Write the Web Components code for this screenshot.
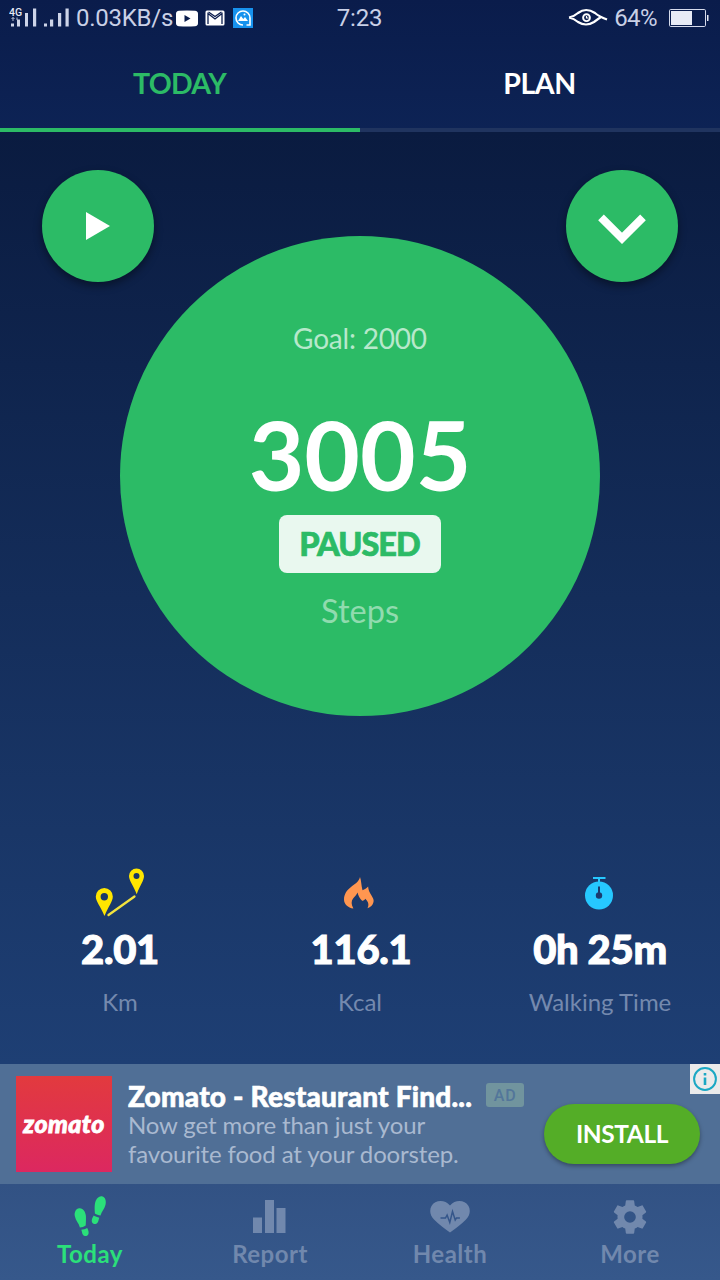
<!DOCTYPE html>
<html lang="en">
<head>
<meta charset="utf-8">
<title>Step counter</title>
<style>
    body{
        margin: 0;
        background: #0a1c40;
        font-family: Lato, "Open Sans", sans-serif;
        color: white;
    }
</style>
</head>
<body>
<step-app></step-app>

<script>
const icons = {
    signal4g: `<svg width="28" height="22" viewBox="0 0 28 22"><g fill="#cdd4e8"><rect x="2" y="16.500" width="3" height="3"/><rect x="8" y="12.500" width="3" height="7"/><rect x="16" y="6" width="3" height="13.500"/><rect x="24" y="1.500" width="3.200" height="18"/></g><path d="M4 10.500v3.500M2.500 12L4 10.500 5.500 12M8 10.500v2.500" stroke="#cdd4e8" fill="none" stroke-width=".9"/><text x="0" y="9" font-family="Roboto" font-weight="500" font-size="10.500" fill="#e6eaf5">4G</text></svg>`,
    signal: `<svg width="27" height="22" viewBox="0 0 27 22"><g fill="#cdd4e8"><rect x="1" y="16.500" width="3" height="3"/><rect x="7" y="12.500" width="3.200" height="7"/><rect x="15" y="6" width="3.200" height="13.500"/><rect x="22.500" y="1.500" width="3.200" height="18"/></g></svg>`,
    video: `<svg width="22" height="17" viewBox="0 0 22 17"><path d="M3 .8Q11 0 19 .8q3 .3 3 3v9.400q0 2.700-3 3Q11 17 3 16.200q-3-.3-3-3V3.800Q0 1.100 3 .8z" fill="#fff"/><path d="M8.500 5l6 3.500-6 3.500z" fill="#0a1c4d"/></svg>`,
    mail: `<svg width="20" height="16" viewBox="0 0 20 16"><rect x=".5" y=".5" width="19" height="15" rx="1.500" fill="#fff"/><path d="M3 14V3.500L10 9l7-5.500V14M3.500 2L10 6.500 16.500 2" fill="none" stroke="#0a1c4d" stroke-width="1.300"/></svg>`,
    gallery: `<svg width="20" height="20" viewBox="0 0 20 20"><path fill="#1792ee" d="M0 0h20v20H0z"/><path d="M10 17a7 7 0 1 1 7-7v7h-3.500" fill="none" stroke="#fff" stroke-width="1.600"/><path d="M5 13l3-5 2.300 3 1.700-2 3 4z" fill="#fff"/><circle cx="11.500" cy="6.500" r="1" fill="#fff"/></svg>`,
    eye: `<svg width="40" height="20" viewBox="0 0 40 20"><g fill="none" stroke="#fff"><path d="M1 9.500Q6 8.500 10 5q8-6 17 0 4 3.500 12 6.500M1 9.500Q6 10.500 10 14q8 5 16 0 4-3 7-5" stroke-width="2.200"/><circle cx="18.500" cy="9.700" r="3.400" stroke-width="1.900"/><path d="M18.500 8v2h2" stroke-width="1.200"/></g></svg>`,
    battery: `<svg width="40" height="18" viewBox="0 0 40 18"><rect x=".5" y=".5" width="36" height="17" rx="1.200" fill="none" stroke="#d6dbec"/><path fill="#e8ebf5" d="M2 2h21v14H2zM38 6h1.500v6H38z"/></svg>`,
    play: `<svg width="24" height="28" viewBox="0 0 24 28"><path d="M0 0l24 14L0 28z" fill="#fff"/></svg>`,
    chevron: `<svg width="48" height="30" viewBox="0 0 48 30"><path d="M3 3.300l21 21 21-21" fill="none" stroke="#fff" stroke-width="8"/></svg>`,
    route: `<svg width="50" height="50" viewBox="0 0 50 50"><g fill="#ffe600"><path fill-rule="evenodd" d="M9.300 20a8.500 8.500 0 0 1 8.500 8.600c0 5-4.300 9.800-8.300 19.400C5.500 38.400.8 33.600.8 28.600A8.500 8.500 0 0 1 9.300 20zm0 5a3.700 3.700 0 1 0 0 7.400 3.700 3.700 0 0 0 0-7.400z"/><path fill-rule="evenodd" d="M41.500.5a7.500 7.500 0 0 1 7.500 7.600c0 4.600-4 9.400-7.300 18.200C38.400 17.500 34 12.700 34 8.100A7.500 7.500 0 0 1 41.500.5zm0 4.500a3 3 0 1 0 0 6 3 3 0 0 0 0-6z"/></g><path d="M13.500 47L39.500 28.500" stroke="#f3e33d" stroke-width="2.300" stroke-linecap="round"/></svg>`,
    flame: `<svg width="30" height="32" viewBox="0 0 30 32"><path d="M16 0c1.300 3.500 1.200 8 2.500 13.300 2.200-.8 4-2 5.600-3.800.3 3.500 1.400 6 3.400 9 1.700 2.800 2.500 4.500 2 6.500-.7 3.200-3 5.200-6 6.300 1.600-3.300 1.200-6.300-2.200-9.600-.9 1.400-2 2-3.200 2-2.200-2-4-5-4.500-8.200-1.300 2.700-2.800 4-4.500 6-2 2.600-2 6 .3 10C4 31 0 27 0 22.500 0 17 3 13 7 10c3-2.500 8-5 9-10z" fill="#ff9650"/></svg>`,
    watch: `<svg width="28" height="33" viewBox="0 0 28 33"><path fill="#26c8ff" d="M8 0h12.500v2H15v3h-2V2H8z"/><circle cx="14" cy="18.500" r="14" fill="#26c8ff"/><circle cx="14" cy="18.500" r="3.200" fill="#1b3b6e"/><path d="M14 9.500v8" stroke="#1b3b6e" stroke-width="2"/></svg>`,
    steps: `<svg width="32" height="41" viewBox="0 0 32 41"><path d="M5.200 12.200c4-.4 6.300 3.500 6.700 7.800.2 3 0 5.500-.2 9.500-1.700 1.300-3.700 1.900-5.800 1.900C5 27.500 1.600 24.500.8 20c-.7-4 1.200-7.500 4.400-7.800zM7.300 33.700c2-.1 4-.8 5.900-1.800 1.200 2 2.100 4.800.9 6.900-1.300 2-4.200 1.600-5.300-.4-.8-1.300-.8-3.200-1.500-4.700z"/><path d="M28 .2c3.300.6 4.400 4.400 3.500 8.500-1 4.500-4 6.500-5 10.800-2-.2-4-.9-5.600-2-.2-3.500-.5-6 0-9.500C21.600 3.500 24.300-.4 28 .2zM19.700 19.600c1.800 1.100 3.500 1.700 5.600 2.100-.7 1.800-.8 3.600-1.800 5.100-1.200 1.700-4 1.700-5.200 0-1.400-2.200.2-5.200 1.400-7.200z"/></svg>`,
    chart: `<svg width="33" height="34" viewBox="0 0 33 34"><path d="M0 17.500h9V33H0zM12 0h9v33h-9zM23.500 8h9v25h-9z"/></svg>`,
    heart: `<svg width="40" height="32" viewBox="0 0 40 32"><path d="M20 31.500Q10 24.500 4 18.500C0 14.500-.8 9 1.500 5 5-1 14.500-2 20 4.500 25.500-2 35-1 38.500 5c2.300 4 1.500 9.500-2.500 13.500Q30 24.500 20 31.500z"/><path d="M10.500 17h5l1.600-3 2.700 7.500 2.700-11 2.700 8.500 1.200-2h3.500" fill="none" stroke="#35568a" stroke-width="1.500"/></svg>`,
    gear: `<svg width="40" height="40" viewBox="0 0 24 24"><path d="M19.430 12.980c.04-.32.070-.64.070-.98s-.03-.66-.07-.98l2.110-1.650c.19-.15.240-.42.120-.64l-2-3.460c-.12-.22-.39-.3-.61-.22l-2.490 1c-.52-.4-1.080-.73-1.690-.98l-.38-2.650C14.460 2.180 14.250 2 14 2h-4c-.25 0-.46.180-.49.420l-.38 2.650c-.61.250-1.170.590-1.690.98l-2.490-1c-.23-.09-.49 0-.61.220l-2 3.460c-.13.220-.07.490.12.640l2.110 1.650c-.04.320-.07.650-.07.980s.03.660.07.980l-2.110 1.650c-.19.150-.24.420-.12.640l2 3.460c.12.220.39.300.61.220l2.490-1c.52.400 1.080.730 1.690.98l.38 2.650c.03.240.24.420.49.420h4c.25 0 .46-.18.490-.42l.38-2.650c.61-.25 1.170-.59 1.690-.98l2.490 1c.23.090.49 0 .61-.22l2-3.460c.12-.22.070-.49-.12-.64zM12 15.500A3.500 3.500 0 1 1 12 8.500a3.500 3.500 0 0 1 0 7z"/></svg>`,
    info: `<svg width="24" height="24" viewBox="0 0 24 24"><circle cx="12" cy="12" r="10.900" fill="none" stroke="#1ba8c4" stroke-width="2"/><path d="M10.700 6h2.600v2.400h-2.600zM10.700 10.500h2.600V18h-2.600z" fill="#1ba8c4"/></svg>`
};

class StepIcon extends HTMLElement{
    connectedCallback(){
        if(!this.shadowRoot) this.attachShadow({mode: 'open'});
        this.shadowRoot.innerHTML = `
            <style>
                :host{ display: block; flex: none; }
                svg{ display: block; fill: currentColor; }
            </style>
            ${icons[this.getAttribute('name')] ?? ''}`;
    }
}
customElements.define('step-icon', StepIcon);

// Base for the elements that only clone a fixed piece of markup
class StepElement extends HTMLElement{
    static markup = '';
    constructor(){
        super();
        this.attachShadow({mode: 'open'});
    }
    connectedCallback(){
        const template = document.createElement('template');
        template.innerHTML = this.constructor.markup;
        this.shadowRoot.replaceChildren(template.content.cloneNode(true));
    }
}

customElements.define('step-status-bar', class extends StepElement{
    static markup = `
        <style>
            :host{
                display: grid;
                grid-template-columns: 1fr auto 1fr;
                align-items: center;
                height: 36px;
                padding: 0 11px 0 9px;
                font: 24px/36px Roboto, sans-serif;
                color: #c9d0e6;
            }
            div{ display: flex; align-items: center; }
            .right{ justify-content: flex-end; }
            .speed{ margin: 0 3px 0 6px; letter-spacing: -.25px; }
            .time{ padding-left: 1px; letter-spacing: -.2px; }
            .percent{ margin: 0 12px 0 6px; letter-spacing: -.6px; }
        </style>
        <div>
            <step-icon name="signal4g"></step-icon>
            <step-icon name="signal" style="margin-left: 6px"></step-icon>
            <span class="speed">0.03KB/s</span>
            <step-icon name="video"></step-icon>
            <step-icon name="mail" style="margin-left: 7px"></step-icon>
            <step-icon name="gallery" style="margin-left: 8px"></step-icon>
        </div>
        <span class="time">7:23</span>
        <div class="right">
            <step-icon name="eye"></step-icon>
            <span class="percent">64%</span>
            <step-icon name="battery"></step-icon>
        </div>
    `;
});

customElements.define('step-tab', class extends StepElement{
    static markup = `
        <style>
            :host{
                display: block;
                flex: 1;
                box-sizing: border-box;
                height: 96px;
                border-bottom: 4px solid #20345f;
                font-size: 28.500px;
                font-weight: 700;
                line-height: 94px;
                letter-spacing: -.4px;
                text-align: center;
                text-indent: -1px;
            }
            :host([active]){
                color: #2cbb66;
                border-color: #2cbb66;
                letter-spacing: -.7px;
            }
        </style>
        <slot></slot>
    `;
});

customElements.define('step-round-button', class extends StepElement{
    static markup = `
        <style>
            :host{
                display: flex;
                align-items: center;
                justify-content: center;
                width: 112px;
                height: 112px;
                border-radius: 50%;
                background: #2cbb66;
                box-shadow: 0 4px 8px rgba(0,0,0,.4);
            }
        </style>
        <slot></slot>
    `;
});

customElements.define('step-dial', class extends StepElement{
    static markup = `
        <style>
            :host{
                display: flex;
                flex-direction: column;
                align-items: center;
                box-sizing: border-box;
                width: 480px;
                height: 480px;
                padding-top: 82px;
                border-radius: 50%;
                background: #2cbb66;
            }
            .goal{ font-size: 28px; line-height: 40px; letter-spacing: -.2px; color: #b7e8cb; }
            .count{ margin-top: 46px; font-size: 96px; line-height: 100px; font-weight: 700; }
            .state{
                margin-top: 11px;
                width: 162px;
                height: 58px;
                border-radius: 8px;
                background: #e9f8ef;
                color: #2cbb66;
                font-size: 32.500px;
                font-weight: 900;
                line-height: 58px;
                letter-spacing: -1px;
                text-align: center;
                text-indent: -1px;
                -webkit-text-stroke: .7px;
            }
            .unit{ margin-top: 18px; font-size: 32.500px; line-height: 40px; color: #91dbaf; }
        </style>
        <div class="goal"><slot name="goal"></slot></div>
        <div class="count"><slot name="count"></slot></div>
        <div class="state"><slot name="state"></slot></div>
        <div class="unit"><slot name="unit"></slot></div>
    `;
});

customElements.define('step-stat', class extends StepElement{
    static markup = `
        <style>
            :host{
                display: flex;
                flex-direction: column;
                align-items: center;
                flex: 1;
            }
            .icon{ display: flex; align-items: center; height: 50px; }
            .value{
                margin-top: 6px;
                font-size: 40px;
                line-height: 50px;
                font-weight: 900;
                letter-spacing: -.3px;
                -webkit-text-stroke: 1px;
            }
            .label{ margin-top: 13px; font-size: 24px; line-height: 30px; color: #7489ae; }
        </style>
        <div class="icon"><slot name="icon"></slot></div>
        <div class="value"><slot name="value"></slot></div>
        <div class="label"><slot></slot></div>
    `;
});

customElements.define('step-ad', class extends StepElement{
    static markup = `
        <style>
            :host{
                display: flex;
                position: relative;
                box-sizing: border-box;
                height: 120px;
                padding: 12px 20px 0 16px;
                background: #506f96;
            }
            .logo{
                width: 96px;
                height: 96px;
                background: linear-gradient(#e23a3e, #dc2860);
                font-size: 25px;
                font-style: italic;
                font-weight: 900;
                line-height: 94px;
                letter-spacing: .4px;
                text-align: center;
                -webkit-text-stroke: .8px;
            }
            .copy{ margin: 6px 0 0 16px; width: 416px; }
            .title{
                display: flex;
                font-size: 28px;
                line-height: 28px;
                font-weight: 900;
                letter-spacing: .2px;
                white-space: nowrap;
                -webkit-text-stroke: .6px;
            }
            .tag{
                margin: 1px 0 0 14px;
                width: 38px;
                height: 24px;
                border-radius: 3px;
                background: #71949e;
                color: #53769a;
                font: 500 16px/25px Roboto, sans-serif;
                letter-spacing: .8px;
                text-align: center;
                -webkit-text-stroke: 0;
            }
            .text{ font-size: 24px; line-height: 29px; letter-spacing: -.14px; color: #a9b9d0; white-space: nowrap; }
            .install{
                margin-top: 28px;
                width: 156px;
                height: 60px;
                border-radius: 30px;
                background: #54ad27;
                box-shadow: 0 2px 4px rgba(0,0,0,.35);
                font-size: 24.500px;
                font-weight: 700;
                line-height: 59px;
                letter-spacing: -.4px;
                text-align: center;
            }
            .info{
                position: absolute;
                top: 0;
                right: 0;
                width: 27px;
                height: 27px;
                padding: 3px 0 0 3px;
                background: #ebebeb;
            }
        </style>
        <div class="logo">zomato</div>
        <div class="copy">
            <div class="title"><span>Zomato - Restaurant Find...</span><span class="tag">AD</span></div>
            <div class="text">Now get more than just your<br>favourite food at your doorstep.</div>
        </div>
        <div class="install">INSTALL</div>
        <div class="info"><step-icon name="info"></step-icon></div>
    `;
});

customElements.define('step-nav-item', class extends StepElement{
    static markup = `
        <style>
            :host{
                display: flex;
                flex-direction: column;
                align-items: center;
                flex: 1;
                color: #7188ad;
                font-size: 24px;
                font-weight: 700;
                line-height: 30px;
                letter-spacing: .5px;
            }
            :host([active]){ color: #2be07a; }
            .icon{ display: flex; align-items: center; height: 41px; margin: 12px 0 2px; }
        </style>
        <div class="icon"><slot name="icon"></slot></div>
        <slot></slot>
    `;
});

customElements.define('step-app', class extends StepElement{
    static markup = `
        <style>
            :host{
                display: flex;
                flex-direction: column;
                width: 720px;
                height: 1280px;
                overflow: hidden;
            }
            header{ background: linear-gradient(#0a1c4b, #0d2355); }
            .tabs{ display: flex; }
            main{
                display: flex;
                flex-direction: column;
                height: 932px;
                background: linear-gradient(#0a1b40, #1e3f74);
            }
            .buttons{
                display: flex;
                justify-content: space-between;
                padding: 38px 42px 0;
            }
            step-dial{ margin: -46px auto 0; }
            .stats{ display: flex; margin-top: 152px; }
            nav{
                display: flex;
                height: 96px;
                background: linear-gradient(#325284, #36588b);
            }
        </style>
        <header>
            <step-status-bar></step-status-bar>
            <div class="tabs">
                <step-tab active>TODAY</step-tab>
                <step-tab>PLAN</step-tab>
            </div>
        </header>
        <main>
            <div class="buttons">
                <step-round-button><step-icon name="play"></step-icon></step-round-button>
                <step-round-button><step-icon name="chevron" style="margin-top: 6px"></step-icon></step-round-button>
            </div>
            <step-dial>
                <span slot="goal">Goal: 2000</span>
                <span slot="count">3005</span>
                <span slot="state">PAUSED</span>
                <span slot="unit">Steps</span>
            </step-dial>
            <div class="stats">
                <step-stat>
                    <step-icon slot="icon" name="route"></step-icon>
                    <span slot="value">2.01</span>Km
                </step-stat>
                <step-stat>
                    <step-icon slot="icon" name="flame" style="margin: 0 2px 0 0"></step-icon>
                    <span slot="value" style="margin-left: 2px">116.1</span>Kcal
                </step-stat>
                <step-stat>
                    <step-icon slot="icon" name="watch" style="margin-right: 2px"></step-icon>
                    <span slot="value">0h 25m</span>Walking Time
                </step-stat>
            </div>
        </main>
        <step-ad></step-ad>
        <nav>
            <step-nav-item active><step-icon slot="icon" name="steps"></step-icon>Today</step-nav-item>
            <step-nav-item><step-icon slot="icon" name="chart" style="margin-right: 2px"></step-icon>Report</step-nav-item>
            <step-nav-item><step-icon slot="icon" name="heart"></step-icon>Health</step-nav-item>
            <step-nav-item><step-icon slot="icon" name="gear"></step-icon>More</step-nav-item>
        </nav>
    `;
});
</script>
</body>
</html>
